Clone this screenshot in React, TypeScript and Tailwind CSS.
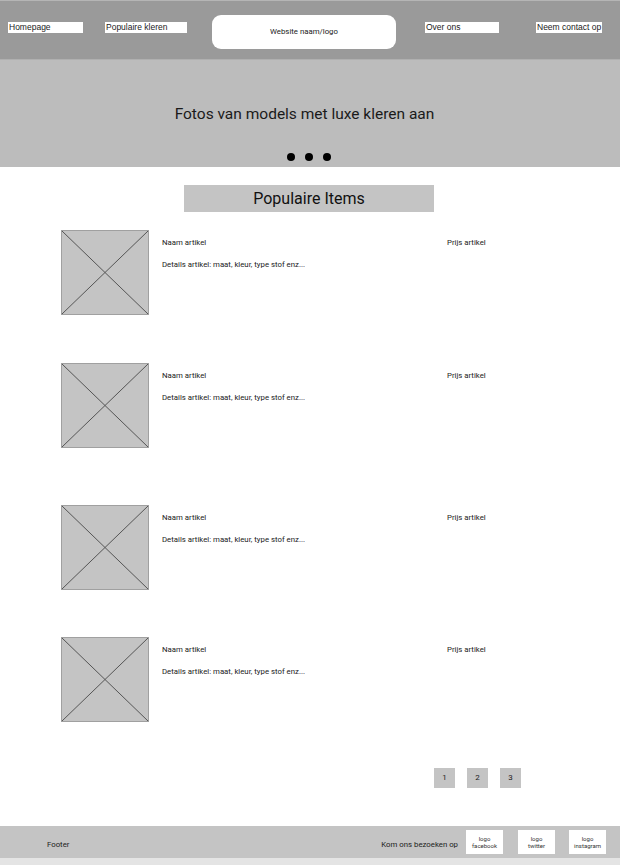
import React from 'react';

const roboto = { fontFamily: 'Roboto, "Liberation Sans", sans-serif' };
const arial = { fontFamily: '"Liberation Sans", Arial, sans-serif' };

function CrossBox({ className, stroke }: { className: string; stroke: string }) {
  return (
    <div className={`relative ${className}`}>
      <svg className="absolute inset-0 w-full h-full" viewBox="0 0 100 100" preserveAspectRatio="none">
        <line x1="0" y1="0" x2="100" y2="100" stroke={stroke} strokeWidth="1" vectorEffect="non-scaling-stroke" />
        <line x1="100" y1="0" x2="0" y2="100" stroke={stroke} strokeWidth="1" vectorEffect="non-scaling-stroke" />
      </svg>
    </div>
  );
}

function NavBox({ label, w, ml }: { label: string; w: string; ml: string }) {
  return (
    <div className={`${w} ${ml} mt-[7px] h-[11px] bg-white text-[8.5px] leading-[10px] pl-[1px] text-[#222]`} style={arial}>
      {label}
    </div>
  );
}

function Item({ mt }: { mt: string }) {
  return (
    <div className={`flex ${mt}`}>
      <CrossBox className="w-[88px] h-[85px] ml-[61px] bg-[#c4c4c4] border border-[#a0a0a0]" stroke="#555" />
      <div className="ml-[13px] w-[285px] pt-[8px] text-[7.8px] text-[#222]" style={roboto}>
        <div className="leading-[10px]">Naam artikel</div>
        <div className="leading-[10px] mt-[12px]">Details artikel: maat, kleur, type stof enz...</div>
      </div>
      <div className="pt-[8px] text-[7.8px] leading-[10px] text-[#222]" style={roboto}>
        Prijs artikel
      </div>
    </div>
  );
}

function LogoBox({ top, bottom, ml }: { top: string; bottom: string; ml: string }) {
  return (
    <div
      className={`${ml} w-[37px] h-[24px] bg-white flex flex-col items-center justify-center text-[6px] leading-[7px] text-[#333]`}
      style={roboto}
    >
      <span>{top}</span>
      <span>{bottom}</span>
    </div>
  );
}

export default function App() {
  return (
    <div className="w-[620px] h-[865px] bg-white flex flex-col overflow-hidden">
      {/* header */}
      <div className="h-[59px] bg-[#9a9a9a] border-t border-[#b5b5b5] flex items-start pt-[14px] pl-[8px]">
        <NavBox label="Homepage" w="w-[75px]" ml="ml-0" />
        <NavBox label="Populaire kleren" w="w-[82px]" ml="ml-[22px]" />
        <div
          className="ml-[25px] w-[184px] h-[34px] bg-white rounded-[9px] flex items-center justify-center text-[7.8px] text-[#222]"
          style={roboto}
        >
          Website naam/logo
        </div>
        <NavBox label="Over ons" w="w-[74px]" ml="ml-[29px]" />
        <NavBox label="Neem contact op" w="w-[66px]" ml="ml-[37px]" />
      </div>

      {/* hero */}
      <div className="relative h-[108px] bg-[#bcbcbc] border-t border-[#b0b0b0]">
        <CrossBox className="absolute inset-0" stroke="#9a9a9a" />
        <div className="relative h-full flex flex-col items-center">
          <div className="mt-[44px] pr-[11px] text-[15.5px] leading-[20px] text-[#1a1a1a]" style={roboto}>
            Fotos van models met luxe kleren aan
          </div>
          <div className="mt-[29px] flex gap-[10px] -ml-[2px]">
            <span className="w-[8px] h-[8px] rounded-full bg-black" />
            <span className="w-[8px] h-[8px] rounded-full bg-black" />
            <span className="w-[8px] h-[8px] rounded-full bg-black" />
          </div>
        </div>
      </div>

      {/* populaire items */}
      <div className="mt-[18px] ml-[184px] w-[250px] h-[27px] bg-[#c4c4c4] flex items-center justify-center text-[16px] text-[#111]" style={roboto}>
        Populaire Items
      </div>

      <Item mt="mt-[18px]" />
      <Item mt="mt-[48px]" />
      <Item mt="mt-[57px]" />
      <Item mt="mt-[47px]" />

      {/* pagination */}
      <div className="mt-[46px] ml-[434px] flex gap-[12px]">
        {['1', '2', '3'].map(n => (
          <div key={n} className="w-[21px] h-[20px] bg-[#c4c4c4] flex items-center justify-center text-[8px] text-[#222]" style={roboto}>
            {n}
          </div>
        ))}
      </div>

      {/* footer */}
      <div className="mt-[38px] h-[32px] bg-[#c4c4c4] flex items-center text-[7.8px] text-[#222]" style={roboto}>
        <span className="ml-[47px] mt-[5px]">Footer</span>
        <span className="ml-auto mt-[5px]">Kom ons bezoeken op</span>
        <LogoBox top="logo" bottom="facebook" ml="ml-[8px]" />
        <LogoBox top="logo" bottom="twitter" ml="ml-[15px]" />
        <LogoBox top="logo" bottom="instagram" ml="ml-[14px]" />
        <div className="w-[14px]" />
      </div>
      <div className="flex-1 bg-[#e4e4e4]" />
    </div>
  );
}
